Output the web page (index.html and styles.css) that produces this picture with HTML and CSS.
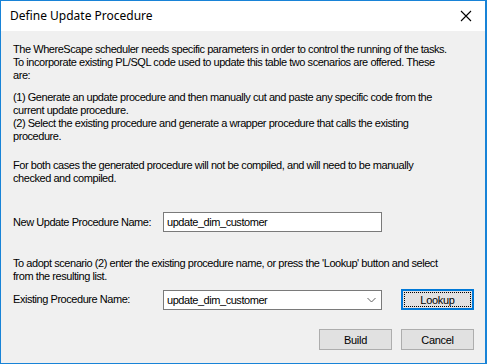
FILE: index.html
```html
<!DOCTYPE html>
<html lang="en">
<head>
    <meta charset="UTF-8">
    <title>Define Update Procedure</title>
    <link rel="stylesheet" href="styles.css">
</head>
<body>
    <div class="dialog">
        <div class="title-bar">
            <span class="title">Define Update Procedure</span>
            <svg class="close" width="12" height="12" viewBox="0 0 12 12">
                <path d="M1 1 L11 11 M11 1 L1 11" stroke="#000" stroke-width="1.1" fill="none"/>
            </svg>
        </div>

        <div class="content">
            <p class="intro">The WhereScape scheduler needs specific parameters in order to control the running of the tasks.<br>To incorporate existing PL/SQL code used to update this table two scenarios are offered. These<br>are:</p>

            <p class="option">(1) Generate an update procedure and then manually cut and paste any specific code from the<br>current update procedure.</p>
            <p class="option">(2) Select the existing procedure and generate a wrapper procedure that calls the existing<br>procedure.</p>

            <p class="note">For both cases the generated procedure will not be compiled, and will need to be manually<br>checked and compiled.</p>

            <div class="field-row new-row">
                <label class="field-label">New Update Procedure Name:</label>
                <div class="text-box">update_dim_customer</div>
            </div>

            <p class="adopt">To adopt scenario (2) enter the existing procedure name, or press the 'Lookup' button and select<br>from the resulting list.</p>

            <div class="field-row">
                <label class="field-label">Existing Procedure Name:</label>
                <div class="text-box combo">
                    <span>update_dim_customer</span>
                    <svg class="arrow" width="9" height="6" viewBox="0 0 9 6">
                        <path d="M0.5 1 L4.5 5 L8.5 1" stroke="#606060" stroke-width="1" fill="none"/>
                    </svg>
                </div>
                <button class="btn btn-focus">Lookup</button>
            </div>

            <div class="actions">
                <button class="btn">Build</button>
                <button class="btn">Cancel</button>
            </div>
        </div>
    </div>
</body>
</html>
```

FILE: styles.css
```css
* {
    margin: 0;
    padding: 0;
    box-sizing: border-box;
}

body {
    width: 487px;
    height: 364px;
    overflow: hidden;
    font-family: 'Liberation Sans', Arial, sans-serif;
    font-size: 11px;
    letter-spacing: -0.45px;
    color: #000;
}

.dialog {
    width: 487px;
    height: 364px;
    border: 1px solid #1883d7;
    border-right-width: 2px;
    background: #f0f0f0;
    display: flex;
    flex-direction: column;
}

.title-bar {
    height: 30px;
    flex-shrink: 0;
    background: #fff;
    display: flex;
    align-items: center;
    justify-content: space-between;
    padding: 0 10px 1px 9px;
}

.title {
    font-family: 'Noto Sans', 'Open Sans', sans-serif;
    font-size: 12px;
    letter-spacing: 0;
    color: #000;
}

.close {
    margin-right: 3px;
}

.content {
    padding: 12px 11px 0 12px;
    line-height: 13px;
    white-space: nowrap;
}

.intro {
    margin-bottom: 9px;
}

.note {
    margin-top: 16px;
}

.field-row {
    display: flex;
    align-items: center;
}

.new-row {
    margin-top: 27px;
    margin-bottom: 25px;
}

.field-label {
    width: 150px;
    flex-shrink: 0;
}

.text-box {
    width: 219px;
    height: 20px;
    flex-shrink: 0;
    background: #fff;
    border: 1px solid #7a7a7a;
    padding: 2px 3px;
    line-height: 14px;
}

.combo {
    display: flex;
    align-items: center;
    justify-content: space-between;
    padding-right: 5px;
}

.adopt {
    margin-bottom: 6px;
}

.btn {
    width: 73px;
    height: 21px;
    flex-shrink: 0;
    background: #e1e1e1;
    border: 1px solid #adadad;
    font-family: 'Liberation Sans', Arial, sans-serif;
    font-size: 11px;
    letter-spacing: -0.3px;
    color: #000;
}

.btn-focus {
    margin-left: 19px;
    border: 2px solid #0078d7;
    outline: 1px dotted #000;
    outline-offset: -4px;
}

.actions {
    display: flex;
    justify-content: flex-end;
    gap: 9px;
    margin-top: 19px;
}
```
